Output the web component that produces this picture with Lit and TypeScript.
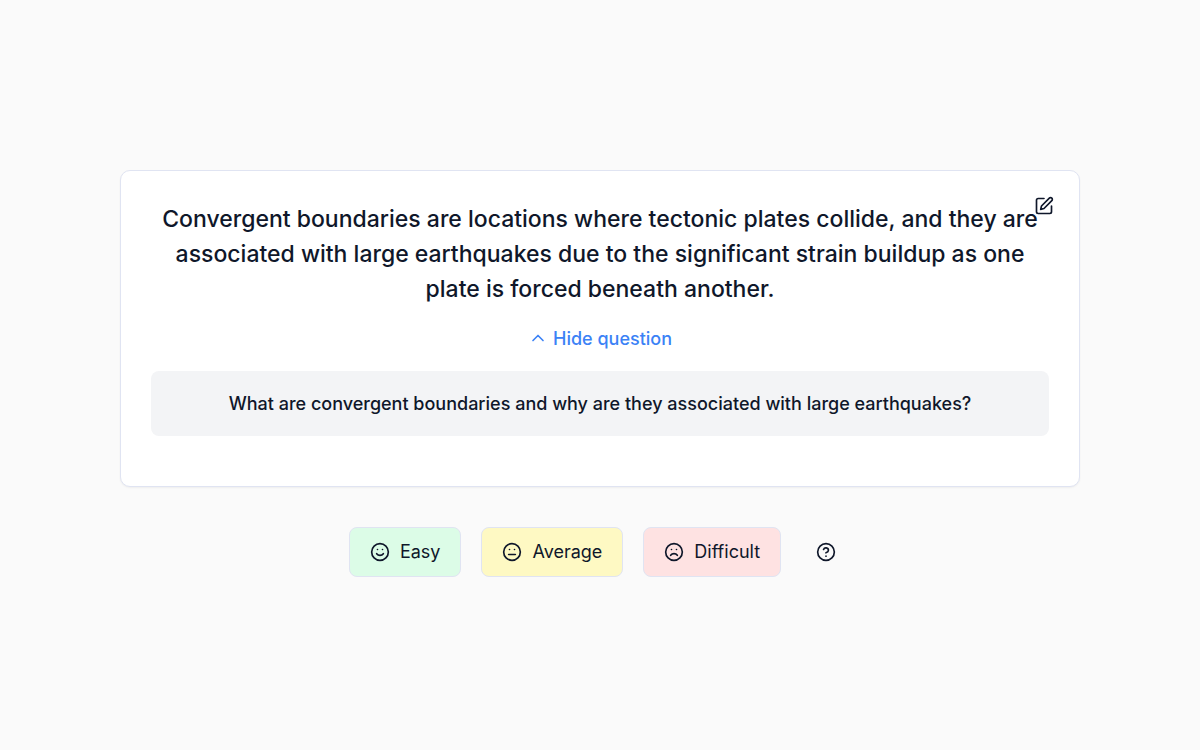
import { LitElement, html, css, svg } from "lit";
import { customElement, state } from "lit/decorators.js";

type Rating = { label: string; tone: string; mouth: unknown };

const ratings: Rating[] = [
  { label: "Easy", tone: "easy", mouth: svg`<path d="M8 14s1.5 2 4 2 4-2 4-2"/>` },
  { label: "Average", tone: "average", mouth: svg`<path d="M8 15h8"/>` },
  { label: "Difficult", tone: "difficult", mouth: svg`<path d="M16 16s-1.5-2-4-2-4 2-4 2"/>` },
];

@customElement("app-root")
export class AppRoot extends LitElement {
  @state() private open = true;

  static styles = css`
    :host {
      display: flex;
      flex-direction: column;
      align-items: center;
      justify-content: center;
      gap: 40px;
      min-height: 100vh;
      box-sizing: border-box;
      padding: 20px 20px 24px;
      background: #fafafa;
      color: #0f172a;
      font-family: Inter, "Liberation Sans", sans-serif;
    }
    button {
      font: inherit;
      color: inherit;
      background: none;
      border: 0;
      padding: 0;
      cursor: pointer;
    }
    svg {
      display: block;
      flex: none;
      width: 20px;
      height: 20px;
      fill: none;
      stroke: currentColor;
      stroke-width: 2;
      stroke-linecap: round;
      stroke-linejoin: round;
    }
    .card {
      position: relative;
      box-sizing: border-box;
      width: 100%;
      max-width: 960px;
      padding: 31px 30px 50px;
      display: flex;
      flex-direction: column;
      align-items: center;
      border: 1px solid #e0e4f2;
      border-radius: 10px;
      background: #fff;
      box-shadow: 0 1px 2px rgba(0, 0, 0, 0.05);
      text-align: center;
    }
    .edit {
      position: absolute;
      top: 25px;
      right: 25px;
    }
    .answer {
      margin: 0;
      font-size: 23px;
      line-height: 35px;
      font-weight: 500;
    }
    .toggle {
      display: flex;
      align-items: center;
      gap: 5px;
      margin: 19px 0 20px;
      color: #3b82f6;
      font-size: 18px;
      line-height: 25px;
      font-weight: 500;
    }
    .question {
      box-sizing: border-box;
      width: 100%;
      margin: 0;
      padding: 20px;
      border-radius: 8px;
      background: #f3f4f6;
      font-size: 18px;
      line-height: 25px;
      font-weight: 500;
    }
    .ratings {
      display: flex;
      flex-wrap: wrap;
      align-items: center;
      gap: 20px;
    }
    .rating {
      display: flex;
      align-items: center;
      gap: 10px;
      padding: 11px 20px;
      border: 1px solid #e0e4f2;
      border-radius: 8px;
      font-size: 18px;
      line-height: 26px;
    }
    .easy { background: #dcfce7; }
    .average { background: #fef9c3; }
    .difficult { background: #fee2e2; }
    .help { padding: 15px; }
  `;

  render() {
    return html`
      <section class="card">
        <button class="edit" aria-label="Edit card">
          <svg viewBox="0 0 24 24"><path d="M12 3H5a2 2 0 0 0-2 2v14a2 2 0 0 0 2 2h14a2 2 0 0 0 2-2v-7"/><path d="M18.375 2.625a2.121 2.121 0 1 1 3 3L12 15l-4 1 1-4Z"/></svg>
        </button>
        <h1 class="answer">Convergent boundaries are locations where tectonic plates collide, and they are associated with large earthquakes due to the significant strain buildup as one plate is forced beneath another.</h1>
        <button class="toggle" aria-expanded=${this.open} @click=${() => (this.open = !this.open)}>
          <svg viewBox="0 0 24 24"><path d=${this.open ? "m18 15-6-6-6 6" : "m6 9 6 6 6-6"}/></svg>
          ${this.open ? "Hide question" : "Show question"}
        </button>
        ${this.open ? html`<p class="question">What are convergent boundaries and why are they associated with large earthquakes?</p>` : null}
      </section>
      <div class="ratings">
        ${ratings.map((r) => html`
          <button class="rating ${r.tone}">
            <svg viewBox="0 0 24 24"><circle cx="12" cy="12" r="10"/>${r.mouth}<path d="M9 9h.01M15 9h.01"/></svg>
            ${r.label}
          </button>`)}
        <button class="help" aria-label="Help">
          <svg viewBox="0 0 24 24"><circle cx="12" cy="12" r="10"/><path d="M9.09 9a3 3 0 0 1 5.83 1c0 2-3 3-3 3M12 17h.01"/></svg>
        </button>
      </div>
    `;
  }
}
